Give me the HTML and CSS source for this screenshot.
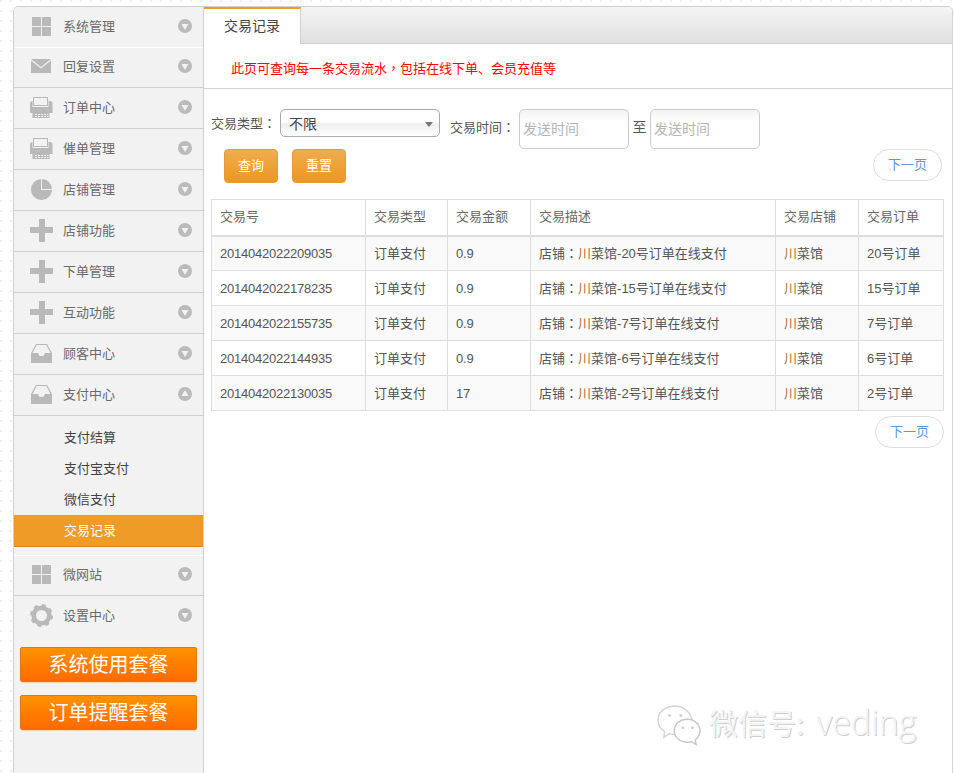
FILE: index.html
```html
<!DOCTYPE html>
<html lang="zh">
<head>
<meta charset="utf-8">
<title>交易记录</title>
<link rel="stylesheet" href="styles.css">
</head>
<body>
<svg class="defs" width="0" height="0" aria-hidden="true">
  <symbol id="i-grid" viewBox="0 0 24 24"><path d="M3 2h9v9H3zM13 2h9v9h-9zM3 12h9v9H3zM13 12h9v9h-9z"/></symbol>
  <symbol id="i-mail" viewBox="0 0 24 24"><path d="M2 3h20L12 11zM2 4.500l10 8 10-8V17H2z"/></symbol>
  <symbol id="i-print" viewBox="0 0 24 24"><path fill-rule="evenodd" d="M4 1h15v9H4zM5 2v7h13V2z"/><path d="M3 5h.5v6h16V5h1.500q2.500 0 2.500 2.500V17H1V7.500Q1 5 3 5z"/><path fill-rule="evenodd" d="M3.500 17h17v5h-17zM6 18v1h2v-1zM9 18v1h2v-1zM12 18v1h2v-1zM15 18v1h2v-1zM18 18v1h1.500v-1zM6 20v1h2v-1zM9 20v1h2v-1zM12 20v1h2v-1zM15 20v1h2v-1zM18 20v1h1.500v-1z"/></symbol>
  <symbol id="i-pie" viewBox="0 0 24 24"><path d="M12 1A10.500 10.500 0 1 0 23 12H12z"/><path d="M13 1A10.500 10.500 0 0 1 23 11H13z"/></symbol>
  <symbol id="i-plus" viewBox="0 0 24 24"><path d="M10 0h6v8h8v6h-8v9h-6v-9H1V8h9z"/></symbol>
  <symbol id="i-tray" viewBox="0 0 24 24"><path fill-rule="evenodd" d="M7 2h11l5 9v10H2V11zM7.700 3L3.500 11H9l1.500 3h4l1.500-3h5.500L17.300 3z"/></symbol>
  <symbol id="i-gear" viewBox="0 0 24 24"><circle cx="12.500" cy="11.500" r="7.800" fill="none" stroke="#b9b9b9" stroke-width="4.600"/><circle cx="12.500" cy="11.500" r="10" fill="none" stroke="#b9b9b9" stroke-width="3" stroke-dasharray="3.850 4"/></symbol>
  <symbol id="i-down" viewBox="0 0 14 14"><circle cx="7" cy="7" r="7"/><path d="M3.500 5h7L7 11z" fill="#f2f2f2"/></symbol>
  <symbol id="i-up" viewBox="0 0 14 14"><circle cx="7" cy="7" r="7"/><path d="M3.500 9h7L7 3z" fill="#f2f2f2"/></symbol>
</svg>

<div class="frame">
  <aside class="side">
    <a class="item item-first"><svg class="ico"><use href="#i-grid"/></svg><span class="label">系统管理</span><svg class="arrow"><use href="#i-down"/></svg></a>
    <a class="item item-mail"><svg class="ico"><use href="#i-mail"/></svg><span class="label">回复设置</span><svg class="arrow"><use href="#i-down"/></svg></a>
    <a class="item"><svg class="ico"><use href="#i-print"/></svg><span class="label">订单中心</span><svg class="arrow"><use href="#i-down"/></svg></a>
    <a class="item"><svg class="ico"><use href="#i-print"/></svg><span class="label">催单管理</span><svg class="arrow"><use href="#i-down"/></svg></a>
    <a class="item"><svg class="ico"><use href="#i-pie"/></svg><span class="label">店铺管理</span><svg class="arrow"><use href="#i-down"/></svg></a>
    <a class="item"><svg class="ico"><use href="#i-plus"/></svg><span class="label">店铺功能</span><svg class="arrow"><use href="#i-down"/></svg></a>
    <a class="item"><svg class="ico"><use href="#i-plus"/></svg><span class="label">下单管理</span><svg class="arrow"><use href="#i-down"/></svg></a>
    <a class="item"><svg class="ico"><use href="#i-plus"/></svg><span class="label">互动功能</span><svg class="arrow"><use href="#i-down"/></svg></a>
    <a class="item"><svg class="ico"><use href="#i-tray"/></svg><span class="label">顾客中心</span><svg class="arrow"><use href="#i-down"/></svg></a>
    <a class="item"><svg class="ico"><use href="#i-tray"/></svg><span class="label">支付中心</span><svg class="arrow"><use href="#i-up"/></svg></a>
    <ul class="sub">
      <li>支付结算</li>
      <li>支付宝支付</li>
      <li>微信支付</li>
      <li class="sub-on">交易记录</li>
    </ul>
    <a class="item item-site"><svg class="ico"><use href="#i-grid"/></svg><span class="label">微网站</span><svg class="arrow"><use href="#i-down"/></svg></a>
    <a class="item item-last"><svg class="ico"><use href="#i-gear"/></svg><span class="label">设置中心</span><svg class="arrow"><use href="#i-down"/></svg></a>
    <div class="plans">
      <a class="plan">系统使用套餐</a>
      <a class="plan">订单提醒套餐</a>
    </div>
  </aside>

  <main class="main">
    <div class="tabs"><span class="tab">交易记录</span></div>
    <p class="notice">此页可查询每一条交易流水<span class="p" lang="zh-TW">，</span>包括在线下单、会员充值等</p>
    <form class="filter">
      <div class="filter-row">
        <label class="lab lab-type">交易类型<span class="p" lang="zh-TW">：</span></label>
        <div class="select">不限<i class="caret"></i></div>
        <label class="lab lab-time">交易时间<span class="p" lang="zh-TW">：</span></label>
        <div class="input">发送时间</div>
        <span class="to">至</span>
        <div class="input">发送时间</div>
      </div>
      <div class="action-row">
        <a class="btn">查询</a>
        <a class="btn">重置</a>
        <a class="next next-top">下一页</a>
      </div>
    </form>
    <table class="grid">
      <thead>
        <tr><th class="c1">交易号</th><th class="c2">交易类型</th><th class="c3">交易金额</th><th class="c4">交易描述</th><th class="c5">交易店铺</th><th class="c6">交易订单</th></tr>
      </thead>
      <tbody>
        <tr><td class="num">2014042022209035</td><td>订单支付</td><td class="num">0.9</td><td>店铺<span class="p" lang="zh-TW">：</span><b>川</b>菜馆-20号订单在线支付</td><td><b>川</b>菜馆</td><td>20号订单</td></tr>
        <tr><td class="num">2014042022178235</td><td>订单支付</td><td class="num">0.9</td><td>店铺<span class="p" lang="zh-TW">：</span><b>川</b>菜馆-15号订单在线支付</td><td><b>川</b>菜馆</td><td>15号订单</td></tr>
        <tr><td class="num">2014042022155735</td><td>订单支付</td><td class="num">0.9</td><td>店铺<span class="p" lang="zh-TW">：</span><b>川</b>菜馆-7号订单在线支付</td><td><b>川</b>菜馆</td><td>7号订单</td></tr>
        <tr><td class="num">2014042022144935</td><td>订单支付</td><td class="num">0.9</td><td>店铺<span class="p" lang="zh-TW">：</span><b>川</b>菜馆-6号订单在线支付</td><td><b>川</b>菜馆</td><td>6号订单</td></tr>
        <tr><td class="num">2014042022130035</td><td>订单支付</td><td class="num">17</td><td>店铺<span class="p" lang="zh-TW">：</span><b>川</b>菜馆-2号订单在线支付</td><td><b>川</b>菜馆</td><td>2号订单</td></tr>
      </tbody>
    </table>
    <div class="pager"><a class="next">下一页</a></div>
  </main>
</div>

<div class="mark">
  <svg class="mark-ico" viewBox="0 0 48 44" width="46" height="42" aria-hidden="true">
    <path d="M20 2C10 2 2 8 2 17c0 5 3 9 7 12l-1 6 6-4c2 .6 4 1 6 1 0-9 8-15 17-15h1C36 9 29 2 20 2z" fill="#fff" stroke="#d4d4d4" stroke-width="1.500"/>
    <path d="M33 16c-8 0-14 5-14 12s6 12 14 12c2 0 3 0 4-.5l5 3-1-5c3-2 5-5 5-9.500 0-7-6-12-13-12z" fill="#fff" stroke="#c8c8c8" stroke-width="1.500"/>
    <circle cx="14" cy="12" r="1.500" fill="#d0d0d0"/><circle cx="26" cy="12" r="1.500" fill="#d0d0d0"/>
    <circle cx="28" cy="25" r="1.300" fill="#c8c8c8"/><circle cx="38" cy="25" r="1.300" fill="#c8c8c8"/>
  </svg>
  <span class="mark-text">微信号: <span class="mark-latin">veding</span></span>
</div>
</body>
</html>
```
FILE: styles.css
```css
* { box-sizing: border-box; }
html, body { height: 100%; }
body {
  margin: 0;
  overflow: hidden;
  position: relative;
  font-family: "Liberation Sans", "Noto Sans CJK SC", sans-serif;
  font-size: 13px;
  color: #555;
  background-color: #fff;
  background-image: radial-gradient(circle at 1px 1px, #e6e6e6 .6px, transparent .9px);
  background-size: 10px 10px;
}
.defs { position: absolute; }
.p { font-family: "Noto Sans CJK TC", sans-serif; }
.frame {
  display: flex;
  width: 940px;
  height: 800px;
  margin: 6px 0 0 13px;
  background: #fff;
  border: 1px solid #d0d0d0;
  border-radius: 5px 5px 0 0;
  overflow: hidden;
}
.side {
  flex: 0 0 190px;
  background: #f2f2f2;
  border-right: 1px solid #d0d0d0;
}
.item {
  display: flex;
  align-items: center;
  height: 41px;
  border-bottom: 1px solid #d0d0d0;
}
.item-first { border-bottom-color: #fff; }
.item-mail { height: 40px; }
.item-site { border-top: 1px solid #fff; }
.item-last { height: 40px; border-bottom: 0; }
.ico { width: 24px; height: 24px; margin-left: 15px; fill: #b9b9b9; flex: none; }
.item-mail .ico { margin-top: 1px; }
.item-site .ico { margin-bottom: 1px; }
.label { margin: 0 0 1px 10px; color: #6a6a6a; width: 115px; line-height: 18px; }
.arrow { width: 14px; height: 14px; margin-bottom: 2px; fill: #bbb; flex: none; }
.item-mail .arrow, .item-site .arrow { margin-bottom: 3px; }
.sub { list-style: none; margin: 0; padding: 6px 0 8px; }
.sub li { height: 31px; line-height: 31px; padding-left: 50px; color: #444; }
.sub .sub-on { height: 32px; color: #fff; background: #ee9b27; border-bottom: 1px solid #d98720; }
.plans { padding: 11px 6px 0; }
.plan {
  display: block;
  height: 35px;
  margin-bottom: 13px;
  line-height: 35px;
  text-align: center;
  font-size: 20px;
  color: #fff;
  border: 1px solid #d87a16;
  border-radius: 2px;
  background: linear-gradient(#ff9200, #ff6a00);
  box-shadow: 0 1px 1px #ffd9a8;
  overflow: hidden;
}
.main { flex: 1; min-width: 0; position: relative; }
.tabs {
  height: 37px;
  background: linear-gradient(#f4f4f4, #e0e0e0);
  border-bottom: 1px solid #d0d0d0;
}
.tab {
  display: block;
  width: 97px;
  height: 37px;
  line-height: 34px;
  text-align: center;
  font-size: 14px;
  color: #444;
  background: #fff;
  border-top: 2px solid #ee9b27;
  border-right: 1px solid #d0d0d0;
}
.notice {
  margin: 0;
  height: 45px;
  padding: 0 0 0 27px;
  line-height: 48px;
  color: #f00;
  border-bottom: 1px solid #d4d4d4;
}
.filter { padding: 20px 10px 0 7px; height: 110px; }
.filter-row { display: flex; align-items: flex-start; height: 40px; }
.lab { color: #555; white-space: nowrap; }
.lab-type { line-height: 27px; width: 69px; }
.lab-time { line-height: 36px; margin-left: 10px; width: 69px; }
.select {
  position: relative;
  width: 160px;
  height: 28px;
  line-height: 28px;
  padding-left: 8px;
  font-size: 14px;
  color: #444;
  border: 1px solid #aaa;
  border-radius: 5px;
  background: linear-gradient(#fff 45%, #eee 55%, #fff);
}
.caret {
  position: absolute;
  right: 6px;
  top: 12px;
  width: 0;
  height: 0;
  border-style: solid;
  border-width: 5px 4px 0;
  border-color: #777 transparent transparent;
}
.input {
  width: 110px;
  height: 40px;
  line-height: 39px;
  padding-left: 3px;
  font-size: 14px;
  color: #b5b5b5;
  border: 1px solid #ccc;
  border-radius: 5px;
  background: linear-gradient(#f2f2f2, #fff 30%);
}
.to { line-height: 36px; width: 21px; text-align: center; font-size: 14px; color: #555; }
.action-row { display: flex; align-items: flex-start; padding-left: 6px; }
.btn {
  width: 54px;
  height: 34px;
  line-height: 31px;
  margin-right: 14px;
  text-align: center;
  color: #fff;
  border: 1px solid #e69a33;
  border-radius: 4px;
  background: linear-gradient(#f0ac4f, #ec971f);
}
.btn:first-child { margin-left: 7px; }
.next {
  display: block;
  width: 69px;
  height: 32px;
  line-height: 30px;
  text-align: center;
  color: #5b9bd5;
  background: #fff;
  border: 1px solid #ddd;
  border-radius: 16px;
}
.next-top { margin-left: auto; }
.grid {
  table-layout: fixed;
  width: 733px;
  margin-left: 7px;
  border-collapse: collapse;
  background: #fff;
}
.grid th, .grid td {
  border: 1px solid #ddd;
  padding: 0 0 2px 8px;
  text-align: left;
  font-weight: normal;
  height: 35px;
  color: #666;
}
.grid th { height: 36px; border-bottom-width: 2px; padding-bottom: 3px; }
.grid td { color: #555; white-space: nowrap; background: #f9f9f9; }
.grid tbody tr:nth-child(even) td { background: #fff; }
.grid b { font-weight: normal; color: #a8743a; }
.grid .num { letter-spacing: -.23px; padding-bottom: 0; }
.c1 { width: 154px; }
.c2 { width: 82px; }
.c3 { width: 83px; }
.c4 { width: 245px; }
.c5 { width: 83px; }
.c6 { width: 85px; }
.pager { display: flex; justify-content: flex-end; padding: 5px 8px 0 0; }
.mark {
  position: absolute;
  left: 656px;
  top: 704px;
  display: flex;
  align-items: center;
  gap: 7px;
}
.mark-text {
  font-family: "Noto Sans CJK SC", "Noto Sans", sans-serif;
  font-size: 29px;
  line-height: 34px;
  margin-bottom: 6px;
  white-space: nowrap;
  word-spacing: 6px;
  color: #f4f4f4;
  text-shadow: 1px 1px 0 #cfcfcf;
}
.mark-latin { font-size: 34px; font-family: "Open Sans", sans-serif; font-weight: 300; }
```
